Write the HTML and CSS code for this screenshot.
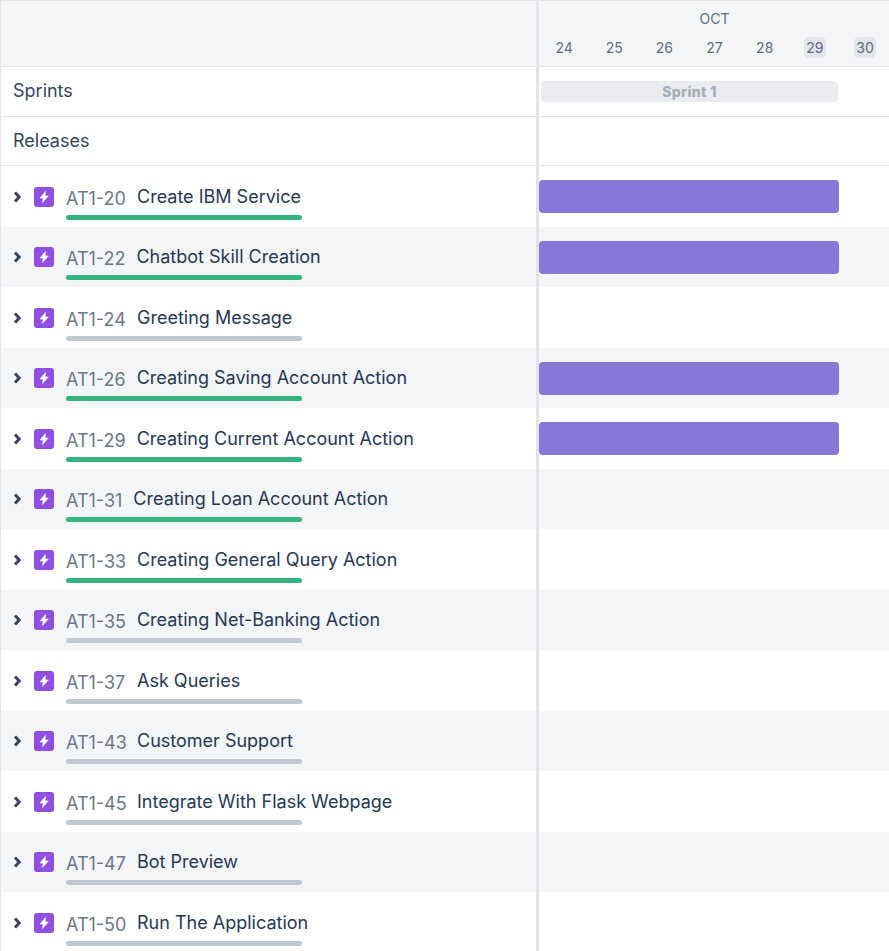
FILE: index.html
```html
<!DOCTYPE html>
<html lang="en">
<head>
  <meta charset="UTF-8" />
  <title>Roadmap</title>
  <link rel="stylesheet" href="styles.css">
</head>
<body>
  <div class="roadmap">
    <div class="head-row">
      <div class="left"></div>
      <div class="right">
        <div class="month">OCT</div>
        <div class="days">
          <span class="day">24</span>
          <span class="day">25</span>
          <span class="day">26</span>
          <span class="day">27</span>
          <span class="day">28</span>
          <span class="day weekend">29</span>
          <span class="day weekend">30</span>
        </div>
      </div>
    </div>
    <div class="meta-row">
      <div class="left">Sprints</div>
      <div class="right"><div class="sprint">Sprint 1</div></div>
    </div>
    <div class="meta-row releases">
      <div class="left">Releases</div>
      <div class="right"></div>
    </div>

    <div id="rows"></div>
  </div>
  <script src="rows.js"></script>
</body>
</html>
```

FILE: styles.css
```css
html, body {
  margin: 0;
  height: 951px;
  overflow: hidden;
  background: #fff;
}
body {
  font-family: Inter, "Open Sans", "Liberation Sans", sans-serif;
  color: #253858;
}
.roadmap {
  border-left: 1px solid #e2e4e9;
}
.head-row, .meta-row, .row {
  display: grid;
  grid-template-columns: 535px 3px 1fr;
  background-image: linear-gradient(#e2e4e9, #e2e4e9);
  background-size: 3px 100%;
  background-position: 535px 0;
  background-repeat: no-repeat;
}
.left {
  grid-column: 1;
}
.right {
  grid-column: 3;
}
.head-row {
  height: 65px;
  background-color: #f4f5f7;
  border-top: 1px solid #e2e4e9;
  border-bottom: 1px solid #e2e4e9;
}
.month {
  margin-top: 8px;
  text-align: center;
  font-size: 14px;
  line-height: 20px;
  color: #5e6c84;
}
.days {
  display: grid;
  grid-template-columns: repeat(7, 50.17px);
  margin-top: 8px;
}
.day {
  justify-self: center;
  width: 22px;
  height: 21px;
  border-radius: 5px;
  text-align: center;
  font-size: 14px;
  line-height: 21px;
  color: #5e6c84;
}
.weekend {
  background: #e4e5ea;
}
.meta-row {
  height: 49px;
  border-bottom: 1px solid #e2e4e9;
  font-size: 18px;
  line-height: 47px;
}
.meta-row.releases {
  height: 48px;
}
.meta-row .left {
  padding-left: 12px;
  color: #344563;
}
.sprint {
  margin: 14px 0 0 2px;
  width: 297px;
  height: 21px;
  border-radius: 4px;
  background: #ebecf0;
  color: #a5adba;
  font-size: 14px;
  font-weight: 800;
  letter-spacing: 0.4px;
  line-height: 21px;
  text-align: center;
}
.row {
  height: 60.5px;
}
.row:nth-child(even) {
  background-color: #f4f5f7;
}
.row .left {
  display: flex;
  align-items: center;
  padding-left: 11px;
}
.chevron {
  width: 10px;
  height: 14px;
  margin-top: 1px;
  margin-right: 12px;
}
.type-icon {
  width: 20px;
  height: 20px;
  margin-top: 1px;
  margin-right: 12px;
  border-radius: 3px;
  background: #904ee2;
}
.type-icon svg {
  display: block;
}
.info {
  width: 236px;
  margin-top: 11px;
  white-space: nowrap;
}
.line {
  display: flex;
  align-items: baseline;
  gap: 11px;
  height: 25px;
}
.key {
  width: 60px;
  font-size: 18px;
  line-height: 25px;
  color: #6b778c;
  position: relative;
  top: 2px;
}
.title {
  font-size: 18px;
  line-height: 25px;
}
.progress {
  height: 5px;
  margin-top: 6px;
  border-radius: 3px;
  background: #c1c7d0;
}
.progress.done {
  background: #36b37e;
}
.bar {
  margin-top: 14px;
  width: 300px;
  height: 33px;
  border-radius: 4px;
  background: #8777d9;
}
```

FILE: rows.js
```js
const issues = [
  ["AT1-20", "Create IBM Service", true, true],
  ["AT1-22", "Chatbot Skill Creation", true, true],
  ["AT1-24", "Greeting Message", false, false],
  ["AT1-26", "Creating Saving Account Action", true, true],
  ["AT1-29", "Creating Current Account Action", true, true],
  ["AT1-31", "Creating Loan Account Action", true, false],
  ["AT1-33", "Creating General Query Action", true, false],
  ["AT1-35", "Creating Net-Banking Action", false, false],
  ["AT1-37", "Ask Queries", false, false],
  ["AT1-43", "Customer Support", false, false],
  ["AT1-45", "Integrate With Flask Webpage", false, false],
  ["AT1-47", "Bot Preview", false, false],
  ["AT1-50", "Run The Application", false, false]
];

const rows = document.getElementById("rows");

rows.innerHTML = issues.map(([key, title, done, bar]) => `
  <div class="row">
    <div class="left">
      <svg class="chevron" viewBox="0 0 10 14"><path d="M3 2.500 7.200 7 3 11.500" fill="none" stroke="#344563" stroke-width="3"/></svg>
      <div class="type-icon">
        <svg width="20" height="20" viewBox="0 0 20 20"><path d="M11.500 4.500 6 11h3.200l-.7 4.500L14.300 9h-3.200z" fill="#fff" stroke="#fff" stroke-width=".6" stroke-linejoin="round"/></svg>
      </div>
      <div class="info">
        <div class="line"><span class="key">${key}</span><span class="title">${title}</span></div>
        <div class="progress${done ? " done" : ""}"></div>
      </div>
    </div>
    <div class="right">${bar ? '<div class="bar"></div>' : ""}</div>
  </div>`).join("");
```
